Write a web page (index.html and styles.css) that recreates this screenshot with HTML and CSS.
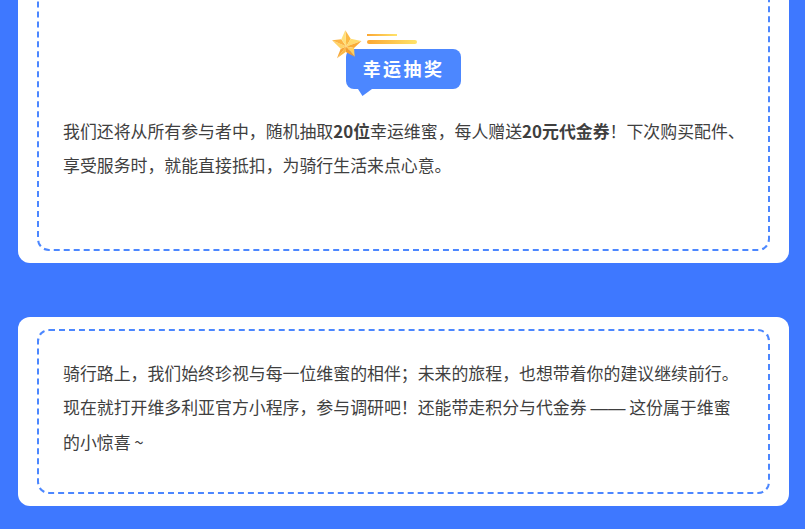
FILE: index.html
```html
<!DOCTYPE html>
<html lang="zh-CN">
<head>
<meta charset="utf-8">
<title>幸运抽奖</title>
<link rel="stylesheet" href="styles.css">
</head>
<body>
<main class="page">
  <section class="card card-lottery">
    <div class="dashed dashed-lottery">
      <div class="heading">
        <div class="badge">
          <svg class="deco" viewBox="0 0 90 36" width="90" height="36" aria-hidden="true">
            <defs>
              <linearGradient id="line" x1="0" x2="1" y1="0" y2="0">
                <stop offset="0" stop-color="#fba733"/>
                <stop offset="1" stop-color="#ffe36a"/>
              </linearGradient>
            </defs>
            <rect x="35" y="4" width="30" height="2" fill="url(#line)"/>
            <rect x="35" y="10" width="50" height="4" rx="2" fill="url(#line)"/>
            <path d="M14.3 16.5 13.3 .3 18.7 8.7Z" fill="#fbb944"/>
            <path d="M14.3 16.5 18.7 8.7 29.5 11Z" fill="#ffdc6e"/>
            <path d="M14.3 16.5 29.5 11 22 18Z" fill="#f9ab35"/>
            <path d="M14.3 16.5 22 18 22.7 26.7Z" fill="#ffcf5c"/>
            <path d="M14.3 16.5 22.7 26.7 13.7 22Z" fill="#f29c2f"/>
            <path d="M14.3 16.5 13.7 22 5 28.3Z" fill="#fbb944"/>
            <path d="M14.3 16.5 5 28.3 8.7 18.7Z" fill="#f5a433"/>
            <path d="M14.3 16.5 8.7 18.7 0 10.3Z" fill="#ffd366"/>
            <path d="M14.3 16.5 0 10.3 9.3 9.3Z" fill="#fbb544"/>
            <path d="M14.3 16.5 9.3 9.3 13.3 .3Z" fill="#ffe07a"/>
          </svg>
          <span class="badge-text">幸运抽奖</span>
          <span class="badge-tail"></span>
        </div>
      </div>
      <p class="copy">我们还将从所有参与者中，随机抽取<b>20位</b>幸运维蜜，每人赠送<b>20元代金券</b>！下次购买配件、<br>享受服务时，就能直接抵扣，为骑行生活来点心意。</p>
    </div>
  </section>
  <section class="card card-closing">
    <div class="dashed dashed-closing">
      <p class="copy">骑行路上，我们始终珍视与每一位维蜜的相伴；未来的旅程，也想带着你的建议继续前行。<br>现在就打开维多利亚官方小程序，参与调研吧！还能带走积分与代金券 <span class="dash">——</span> 这份属于维蜜<br>的小惊喜 ~</p>
    </div>
  </section>
</main>
</body>
</html>
```
FILE: styles.css
```css
* { box-sizing: border-box; }
html, body { margin: 0; height: 529px; overflow: hidden; }
body {
  background: #3e78ff;
  font-family: "Noto Sans CJK SC", "Liberation Sans", sans-serif;
  color: #3f3f3f;
}
.page {
  display: flex;
  flex-direction: column;
  gap: 54px;
  margin-top: -30px;
  padding: 0 16px 0 18px;
}
.card {
  background: #fff;
  border-radius: 12px;
  padding: 12px 19px;
}
.dashed {
  border: 2px dashed #4c87ff;
  border-radius: 12px;
}
.dashed-lottery { height: 269px; padding: 0 24px; }
.dashed-closing { height: 165px; padding: 25px 24px 0; }
.heading {
  display: flex;
  justify-content: center;
  padding-top: 65px;
  margin-bottom: 25px;
}
.badge {
  position: relative;
  width: 115px;
  height: 40px;
  background: #4c87ff;
  border-radius: 8px;
  display: flex;
  align-items: center;
  justify-content: center;
}
.badge-text {
  color: #fff;
  font-size: 18px;
  font-weight: 700;
  letter-spacing: 2.4px;
  line-height: 38px;
  height: 40px;
}
.badge-tail {
  position: absolute;
  left: 12px;
  top: 40px;
  width: 14px;
  height: 7px;
  background: #4c87ff;
  clip-path: polygon(0 0, 100% 0, 32% 100%);
}
.deco {
  position: absolute;
  left: -14px;
  top: -19px;
}
.copy {
  margin: 0;
  font-size: 16.9px;
  line-height: 34px;
  white-space: nowrap;
}
.copy b { font-weight: 700; }
.dash {
  font-family: "Liberation Sans", sans-serif;
  font-size: 17.5px;
}
```
